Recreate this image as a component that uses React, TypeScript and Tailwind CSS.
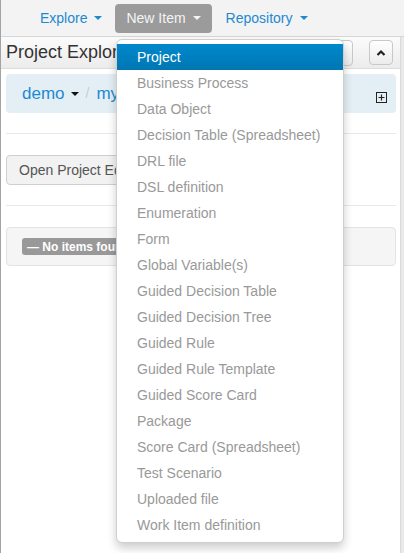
import React from "react";

const items = [
  "Project",
  "Business Process",
  "Data Object",
  "Decision Table (Spreadsheet)",
  "DRL file",
  "DSL definition",
  "Enumeration",
  "Form",
  "Global Variable(s)",
  "Guided Decision Table",
  "Guided Decision Tree",
  "Guided Rule",
  "Guided Rule Template",
  "Guided Score Card",
  "Package",
  "Score Card (Spreadsheet)",
  "Test Scenario",
  "Uploaded file",
  "Work Item definition",
];

function Caret({ color, ml = "ml-[7px]" }: { color: string; ml?: string }) {
  return (
    <span
      className={`inline-block ${ml} w-0 h-0 border-l-[4px] border-r-[4px] border-t-[4px] border-l-transparent border-r-transparent align-middle`}
      style={{ borderTopColor: color }}
    />
  );
}

export default function App() {
  return (
    <div
      className="relative w-[404px] h-[553px] overflow-hidden bg-white border-l border-[#a3a3a3] flex flex-col"
      style={{ fontFamily: '"Liberation Sans", Arial, sans-serif' }}
    >
      {/* navbar */}
      <div className="h-[37px] shrink-0 bg-[#f3f3f3] border-b border-[#d6d6d6] flex items-center pl-[27px] text-[14px]">
        <div className="pl-3 pr-[13px] h-[29px] flex items-center text-[#1d8ad0]">
          Explore
          <Caret color="#1d8ad0" />
        </div>
        <div className="px-[11px] h-[29px] flex items-center bg-[#9b9b9b] rounded-[4px] text-[#f4f4f4]">
          New Item
          <Caret color="#f4f4f4" />
        </div>
        <div className="pl-[14px] pr-3 h-[29px] flex items-center text-[#1d8ad0]">
          Repository
          <Caret color="#1d8ad0" />
        </div>
      </div>

      <div className="flex flex-1 min-h-0">
        {/* panel */}
        <div className="w-[399px] flex flex-col">
          <div className="h-[32px] shrink-0 bg-gradient-to-b from-[#fbfbfb] to-[#ececec] border-b border-[#dcdcdc] flex items-center pl-[5px] pr-[7px]">
            <div className="text-[18px] text-[#333] flex-1 whitespace-nowrap">Project Explorer</div>
            <div className="w-[24px] h-[26px] rounded-[4px] border border-[#c8c8c8] bg-gradient-to-b from-white to-[#ececec] mr-[16px]" />
            <div className="w-[24px] h-[25px] rounded-[4px] border border-[#c8c8c8] bg-gradient-to-b from-white to-[#ececec] flex items-center justify-center">
              <svg width="10" height="8" viewBox="0 0 10 8">
                <path d="M1.5 6 L5 2.5 L8.5 6" stroke="#222" strokeWidth="2.2" fill="none" />
              </svg>
            </div>
          </div>

          <div className="pl-[5px] pr-[4px] pt-[5px] flex flex-col">
            <div className="h-[39px] bg-[#e4eff5] rounded-[4px] flex items-center pl-[16px] pr-[9px] text-[17px]">
              <span className="text-[#1d8ad0]">demo</span>
              <Caret color="#111" ml="ml-[6px]" />
              <span className="text-[#ccc] mx-[7px] text-[14px]">/</span>
              <span className="text-[#1d8ad0]">myteam</span>
              <div className="flex-1" />
              <svg width="11" height="11" viewBox="0 0 11 11" className="mt-[7px]">
                <rect x="0.5" y="0.5" width="10" height="10" fill="none" stroke="#222" strokeWidth="1" />
                <path d="M5.5 2.5 V8.5 M2.5 5.5 H8.5" stroke="#222" strokeWidth="1.2" />
              </svg>
            </div>

            <div className="mt-[20px] border-t border-[#e8e8e8]" />

            <div className="mt-[21px]">
              <div className="inline-flex items-center h-[30px] px-[12px] bg-[#f2f2f2] border border-[#cfcfcf] rounded-[4px] text-[14px] text-[#555]">
                Open Project Editor
              </div>
            </div>

            <div className="mt-[20px] border-t border-[#e8e8e8]" />

            <div className="mt-[21px] h-[39px] bg-[#f5f5f5] border border-[#e3e3e3] rounded-[4px] flex items-center pl-[15px]">
              <span className="bg-[#999] text-white text-[12px] font-bold rounded-[3px] px-[5px] h-[17px] flex items-center">
                — No items found
              </span>
            </div>
          </div>
        </div>
        {/* right strip */}
        <div className="flex-1 bg-[#e9e9e9] border-l border-[#dadada]" />
      </div>

      {/* dropdown */}
      <div className="absolute left-[115px] top-[39px] w-[228px] bg-white border border-[#cfcfcf] rounded-[6px] py-[4px] shadow-[0_5px_10px_rgba(0,0,0,0.2)]">
        {items.map((it, i) => (
          <div
            key={it}
            className={
              i === 0
                ? "px-[20px] py-[3px] leading-[20px] text-[14px] text-white bg-gradient-to-b from-[#0088cc] to-[#0077b3]"
                : "px-[20px] py-[3px] leading-[20px] text-[14px] text-[#999]"
            }
          >
            {it}
          </div>
        ))}
      </div>
    </div>
  );
}
